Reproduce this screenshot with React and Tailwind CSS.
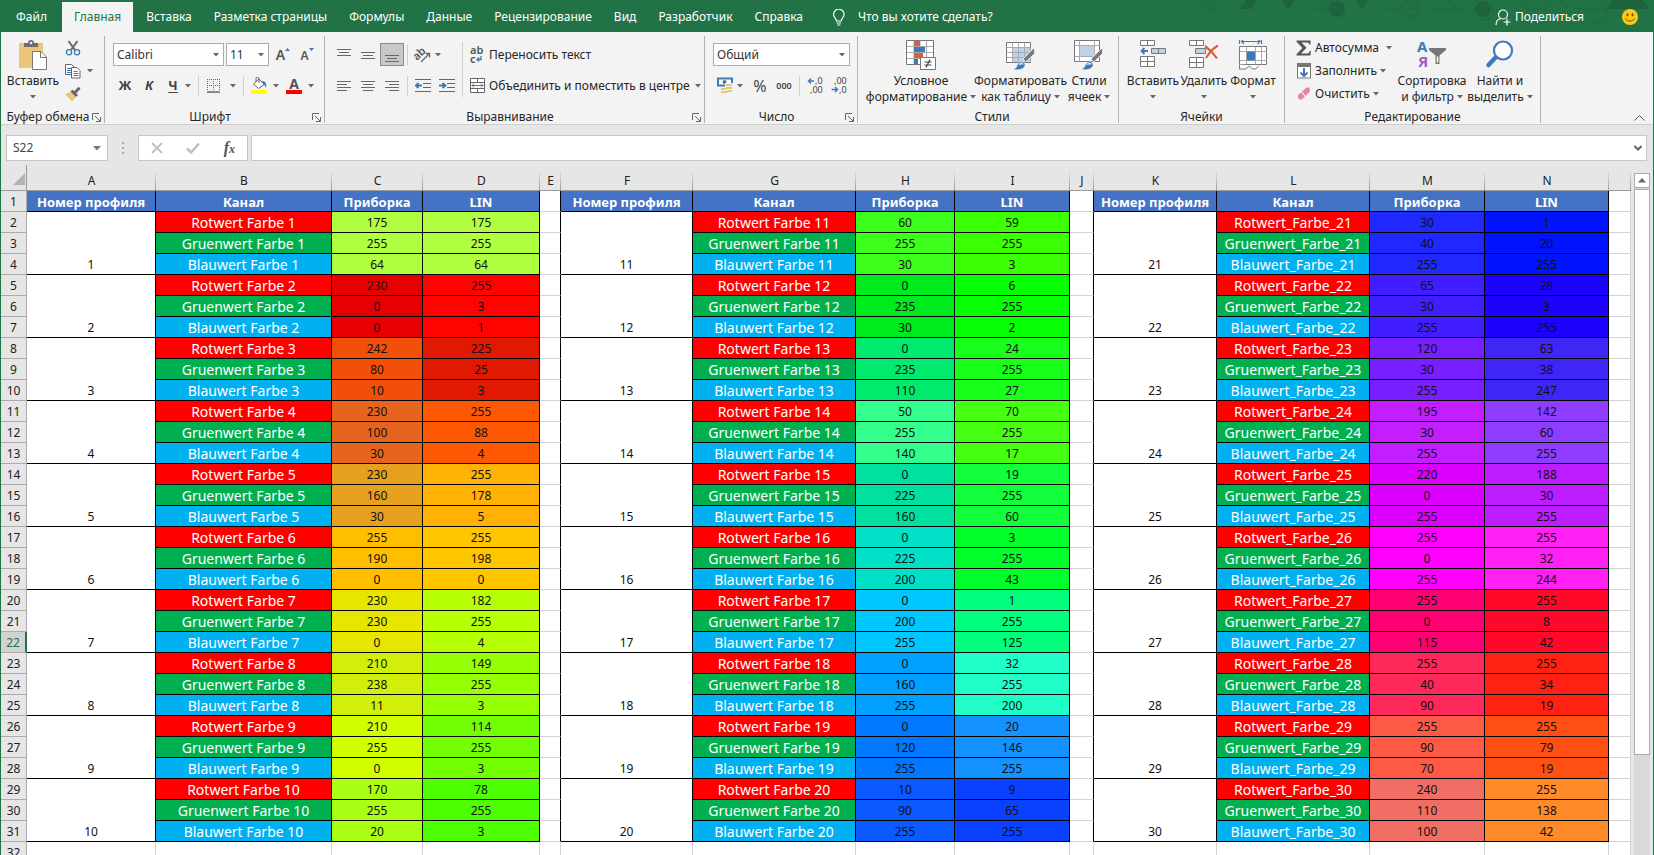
import clsx from 'clsx'

const TABS = ['Файл', 'Главная', 'Вставка', 'Разметка страницы', 'Формулы', 'Данные', 'Рецензирование', 'Вид', 'Разработчик', 'Справка']

const LETTERS = ['A', 'B', 'C', 'D', 'E', 'F', 'G', 'H', 'I', 'J', 'K', 'L', 'M', 'N', '']

// [panel rgb, LIN rgb] for every profile, 1..30
const PROFILES = [
  [[175, 255, 64], [175, 255, 64]],
  [[230, 0, 0], [255, 3, 1]],
  [[242, 80, 10], [225, 25, 3]],
  [[230, 100, 30], [255, 88, 4]],
  [[230, 160, 30], [255, 178, 5]],
  [[255, 190, 0], [255, 198, 0]],
  [[230, 230, 0], [182, 255, 4]],
  [[210, 238, 11], [149, 255, 3]],
  [[210, 255, 0], [114, 255, 3]],
  [[170, 255, 20], [78, 255, 3]],
  [[60, 255, 30], [59, 255, 3]],
  [[0, 235, 30], [6, 255, 2]],
  [[0, 235, 110], [24, 255, 27]],
  [[50, 255, 140], [70, 255, 17]],
  [[0, 225, 160], [19, 255, 60]],
  [[0, 225, 200], [3, 255, 43]],
  [[0, 200, 255], [1, 255, 125]],
  [[0, 160, 255], [32, 255, 200]],
  [[0, 120, 255], [20, 146, 255]],
  [[10, 90, 255], [9, 65, 255]],
  [[30, 40, 255], [1, 20, 255]],
  [[65, 30, 255], [28, 3, 255]],
  [[120, 30, 255], [63, 38, 247]],
  [[195, 30, 255], [142, 60, 255]],
  [[220, 0, 255], [188, 30, 255]],
  [[255, 0, 255], [255, 32, 244]],
  [[255, 0, 115], [255, 8, 42]],
  [[255, 40, 90], [255, 34, 19]],
  [[255, 90, 70], [255, 79, 19]],
  [[240, 110, 100], [255, 138, 42]],
]

const CHANNELS = [
  { name: 'Rotwert', bg: 'bg-[#ff0000]' },
  { name: 'Gruenwert', bg: 'bg-[#00b050]' },
  { name: 'Blauwert', bg: 'bg-[#00b0f0]' },
]

function Caret({ className }) {
  return (
    <svg className={clsx('shrink-0', className)} width="6" height="4" viewBox="0 0 6 4" fill="#666">
      <path d="M0 0h6L3 3.6z" />
    </svg>
  )
}

function Launcher() {
  return (
    <svg width="9" height="9" viewBox="0 0 9 9" fill="none" stroke="#666">
      <path d="M.5 7V.5H7M3 3l5 5M8.500 4v4.500H4" />
    </svg>
  )
}

function Group({ title, launcher, className, children }) {
  return (
    <section className={clsx('flex shrink-0 flex-col border-r border-[#b1b1b1]', className)}>
      <div className="flex h-[75px]">{children}</div>
      <div className="flex h-3 items-center px-[3px] leading-3">
        <h2 className="flex-1 text-center whitespace-nowrap">{title}</h2>
        {launcher && (
          <button aria-label={title + ': параметры'}>
            <Launcher />
          </button>
        )}
      </div>
    </section>
  )
}

function IconButton({ label, className, children }) {
  return (
    <button aria-label={label} className={clsx('flex h-[23px] shrink-0 items-center justify-center', className || 'w-6')}>
      {children}
    </button>
  )
}

function Divider({ className }) {
  return <div className={clsx('w-px shrink-0 bg-[#d0d0d0]', className)} />
}

function Combo({ label, value, className }) {
  return (
    <div className={clsx('flex h-[23px] items-center border border-[#ababab] bg-white pr-1', className)}>
      <select aria-label={label} defaultValue={value} className="min-w-0 flex-1 appearance-none bg-transparent pl-[3px] text-[#333] outline-none">
        <option>{value}</option>
      </select>
      <Caret className="pointer-events-none" />
    </div>
  )
}

function BigButton({ icon, line1, line2, className }) {
  return (
    <button className={clsx('flex shrink-0 flex-col items-center pt-1', className)}>
      {icon}
      <span className="mt-[3px] leading-4 whitespace-nowrap">{line1}</span>
      <span className="flex h-4 items-center gap-[3px] leading-4 whitespace-nowrap">
        {line2}
        <Caret />
      </span>
    </button>
  )
}

function Lines({ rows }) {
  return (
    <svg width="16" height="16" viewBox="0 0 16 16" stroke="#666">
      {rows.map(([x, y, w]) => (
        <path key={y} d={`M${x} ${y}.5h${w}`} />
      ))}
    </svg>
  )
}

function PasteIcon() {
  return (
    <svg width="30" height="30" viewBox="0 0 30 30">
      <path d="M1 3h24v25H1z" fill="#ecc57c" />
      <path d="M6 7V3h4a3 3 0 0 1 6 0h4v4z" fill="#6d6d6d" />
      <circle cx="13" cy="3" r="1.300" fill="#f3f3f3" />
      <path d="M14.500 11.500h8.500l5.500 5.500v12.500h-14z" fill="#fff" stroke="#777" />
      <path d="M22.500 11.500v6h6" fill="none" stroke="#777" />
    </svg>
  )
}

function CutIcon() {
  return (
    <svg width="16" height="16" viewBox="0 0 16 16" fill="none">
      <path d="M3.500 1l6.500 9M12.500 1L6 10" stroke="#666" strokeWidth="2" />
      <circle cx="4" cy="12.200" r="2.600" stroke="#3f7ab8" strokeWidth="1.300" />
      <circle cx="12" cy="12.200" r="2.600" stroke="#3f7ab8" strokeWidth="1.300" />
    </svg>
  )
}

function CopyIcon() {
  return (
    <svg width="16" height="16" viewBox="0 0 16 16" fill="#fff">
      <path d="M.5 1.500h6l3 3v7h-9z" stroke="#666" />
      <path d="M2 5.500h4M2 7.500h4M2 9.500h4" stroke="#3f7ab8" />
      <path d="M6.500 4.500h5.500l3 3v7.500H6.500z" stroke="#666" />
      <path d="M8.500 8.500h4M8.500 10.500h5M8.500 12.500h5" stroke="#3f7ab8" />
    </svg>
  )
}

function PainterIcon() {
  return (
    <svg width="16" height="16" viewBox="0 0 16 16">
      <path d="M0 8l6-2 5 5-4 4.500z" fill="#ecc57c" />
      <path d="M5.500 5.500L7.500 3.500l5.500 5.500-2 2z" fill="#666" />
      <path d="M9 5.500L13.500.8l2 2L11 7.500z" fill="#666" />
    </svg>
  )
}

function OrientationIcon() {
  return (
    <svg className="overflow-visible" width="18" height="16" viewBox="0 0 18 16">
      <text x="0" y="11" transform="rotate(-45 5 9)" fontSize="11" fill="#555" fontWeight="600">ab</text>
      <path d="M7 15l8-8M11.500 6.500H15.500V10.500" fill="none" stroke="#666" strokeWidth="1.300" />
    </svg>
  )
}

function IndentIcon({ right }) {
  return (
    <svg width="16" height="14" viewBox="0 0 16 14" fill="none">
      <path d="M0 .5h16M8 4.500h8M8 8.500h8M0 12.500h16" stroke="#666" />
      <path d={right ? 'M0 6.500h6M3.500 4l3 2.500-3 2.500' : 'M7 6.500H1M3.500 4L.8 6.500l2.700 2.500'} stroke="#3f7ab8" strokeWidth="1.800" />
    </svg>
  )
}

function WrapIcon() {
  return (
    <svg className="overflow-visible" width="18" height="18" viewBox="0 0 18 18">
      <text x="2" y="8" fontSize="11" fill="#555" fontWeight="600">ab</text>
      <text x="2" y="17" fontSize="11" fill="#555" fontWeight="600">c</text>
      <path d="M13 10v3.500H9M11 11.500l-2 2 2 2" fill="none" stroke="#3f7ab8" strokeWidth="1.300" />
    </svg>
  )
}

function MergeIcon() {
  return (
    <svg width="18" height="16" viewBox="0 0 18 16" fill="none">
      <path d="M2.500.5h14v14h-14zM2.500 4.500h14M2.500 10.500h14M9.500.5v4M9.500 10.500v4" fill="#fff" stroke="#666" />
      <path d="M4 7.500h11M6 5.500l-2 2 2 2M13 5.500l2 2-2 2" stroke="#3f7ab8" />
    </svg>
  )
}

function BorderIcon() {
  return (
    <svg width="14" height="14" viewBox="0 0 14 14" fill="none" stroke="#666">
      <path d="M.5 0v12M6.500 0v12M12.500 0v12M0 .5h13M0 6.500h13" strokeDasharray="1 1" />
      <path d="M0 13h13" strokeWidth="1.500" />
    </svg>
  )
}

function FillIcon() {
  return (
    <svg width="16" height="17" viewBox="0 0 16 17">
      <path d="M2.500 7L8 2l5 5.500-5.500 4z" fill="#fff" stroke="#666" />
      <path d="M5 5V1.500a1.500 1.500 0 0 1 3 0V6" fill="none" stroke="#666" />
      <path d="M11 4c3 0 5 2.500 4 7-.6-2-1.400-3-2.500-3.500z" fill="#3f7ab8" />
      <path d="M0 13h16v4H0z" fill="#ffff00" />
    </svg>
  )
}

function MoneyIcon() {
  return (
    <svg width="18" height="17" viewBox="0 0 18 17">
      <path d="M2 1.500h14v7H2z" fill="#fff" stroke="#3f7ab8" strokeWidth="2" />
      <circle cx="8.500" cy="5" r="2" fill="#3f7ab8" />
      <path d="M9 6h8v10H9zM4 10h8v7H4z" fill="#f3f3f3" />
      <path d="M10 7h6v2h-6zM10 10h6v2h-6zM5 11h5v2H5zM5 14h6v2H5zM11 13h5v2h-5z" fill="#ecc57c" />
    </svg>
  )
}

function DecimalsIcon({ increase }) {
  return (
    <svg className="overflow-visible" width="16" height="17" viewBox="0 0 16 17" fill="#444">
      <text x={increase ? 8 : 3} y="7" fontSize="9">{increase ? ',0' : ',00'}</text>
      <text x={increase ? 3 : 8} y="16" fontSize="9">{increase ? ',00' : ',0'}</text>
      <path d={increase ? 'M7 4H1.500M4 1.500L1.500 4 4 6.500' : 'M.5 12.500H6.500M4 10l2.500 2.500L4 15'} fill="none" stroke="#3f7ab8" strokeWidth="1.500" />
    </svg>
  )
}

function BrushOver() {
  return (
    <g>
      <path d="M28.500 7.500v6L20 22l-3-3z" fill="#7a7a7a" stroke="#f3f3f3" strokeWidth=".8" />
      <path d="M7 29.500c4-1 3.500-4.500 6.500-7 2.500-2 6 0 5.500 3-.8 3.500-6 5-12 4z" fill="#3f7ab8" stroke="#f3f3f3" strokeWidth=".6" />
      <path d="M13.500 25c1-2 3-2 3.500-.5" fill="none" stroke="#dbe7f3" strokeWidth="1.500" />
    </g>
  )
}

function ConditionalIcon() {
  return (
    <svg width="30" height="30" viewBox="0 0 30 30">
      <path d="M.5.500h27v24H.5z" fill="#fff" stroke="#777" />
      <path d="M8 .5v24M20.500.5v24M1 6.500h26M1 12.500h26M1 18.500h26M14 .5v6" stroke="#aaa" />
      <path d="M8 1h6v5H8zM8 13h9v5H8z" fill="#d9603f" />
      <path d="M8 7h11v5H8zM8 19h4v5H8z" fill="#3f7ab8" />
      <path d="M14.500 17.500h15v12h-15z" fill="#fff" stroke="#777" />
      <path d="M18.500 22h7M18.500 25h7M24 19.500l-4 8" stroke="#444" strokeWidth="1.200" />
    </svg>
  )
}

function FormatTableIcon() {
  return (
    <svg width="30" height="30" viewBox="0 0 30 30">
      <path d="M.5 2.500h24v20H.5z" fill="#fff" stroke="#777" />
      <path d="M7 8h17.500v14H7z" fill="#bcd2e8" />
      <path d="M6.500 2.500v20M12.500 2.500v20M18.500 2.500v20M.5 7.500h24M.5 12.500h24M.5 17.500h24" stroke="#aaa" />
      <BrushOver />
    </svg>
  )
}

function CellStylesIcon() {
  return (
    <svg width="30" height="30" viewBox="0 0 30 30">
      <path d="M.5.500h25v21H.5z" fill="#fff" stroke="#777" />
      <path d="M5.500.500v21M20.500.500v21M.5 5.500h25M.5 16.500h25" stroke="#aaa" />
      <path d="M6 6h14v10H6z" fill="#bcd2e8" />
      <BrushOver />
    </svg>
  )
}

function InsertIcon() {
  return (
    <svg width="30" height="30" viewBox="0 0 30 30" fill="#fff" stroke="#777">
      <path d="M2.500.500h14v5h-14zM9.500.500v5M2.500 16.500h14v10h-14zM9.500 16.500v10M2.500 21.500h14" />
      <path d="M13.500 8.500h14v5h-14zM20.500 8.500v5" fill="#bcd2e8" />
      <path d="M10 11H4M6.500 8L3.500 11l3 3" fill="none" stroke="#3f7ab8" strokeWidth="1.800" />
    </svg>
  )
}

function DeleteIcon() {
  return (
    <svg width="30" height="30" viewBox="0 0 30 30" fill="#fff" stroke="#777">
      <path d="M.5.500h14v5h-14zM7.500.500v5M.5 17.500h14v10h-14zM7.500 17.500v10M.5 22.500h14" />
      <path d="M6.500 8.500h10v5h-10z" fill="#bcd2e8" />
      <path d="M16 6c4 3 9 8 12 12.500M29 5.500c-5 3-9 7.500-12 12.500" fill="none" stroke="#d9603f" strokeWidth="2.200" />
    </svg>
  )
}

function FormatIcon() {
  return (
    <svg width="30" height="30" viewBox="0 0 30 30" fill="none">
      <path d="M1.500 6.500h27v18h-27z" fill="#fff" stroke="#777" />
      <path d="M8.500 6.500v18M17.500 6.500v18M23.500 6.500v18M1.500 11.500h27M1.500 20.500h27" stroke="#aaa" />
      <path d="M9 11.500h8v9H9z" fill="#3f7ab8" />
      <path d="M1.500 24.500v4.500h6l4-3 3 3h3l3-3" fill="#fff" stroke="#777" />
      <path d="M1.500-1v5M23.500-1v5M3 1.500h19M6-1L3.500 1.500 6 4M19.500-1L22 1.500 19.500 4" stroke="#3f7ab8" strokeWidth="1.200" />
    </svg>
  )
}

function SumIcon() {
  return (
    <svg width="16" height="16" viewBox="0 0 16 16">
      <path d="M.5.500h14v4h-1.200c-.3-1.500-1-2-2.500-2H5.500l5 5.300-5.500 5.700h6c1.500 0 2.300-.6 2.700-2.500h1.200l-.5 4.500H.5v-1.300L6.500 8 .5 1.700z" fill="#555" />
    </svg>
  )
}

function FillDownIcon() {
  return (
    <svg width="16" height="16" viewBox="0 0 16 16">
      <path d="M1.500 1h13v14h-13z" fill="#fff" stroke="#777" />
      <path d="M1 0h14v4H1z" fill="#777" />
      <path d="M8 5v8M4.500 9.500L8 13l3.500-3.500" fill="none" stroke="#3f7ab8" strokeWidth="2" />
    </svg>
  )
}

function EraserIcon() {
  return (
    <svg width="16" height="14" viewBox="0 0 16 14">
      <path d="M6 4.500L10.500.500h3l.5 4L9.500 9z" fill="#e8879c" />
      <path d="M5.300 5.200L8.800 9.800 6 12.500H3.500L2 11V8z" fill="#e8879c" />
    </svg>
  )
}

function SortIcon() {
  return (
    <svg className="overflow-visible" width="30" height="30" viewBox="0 0 30 30">
      <text x="0" y="12" fontSize="15" fontWeight="700" fill="#3f7ab8">А</text>
      <text x="1" y="27" fontSize="15" fontWeight="700" fill="#9a5fc0">Я</text>
      <path d="M12 8h17v2l-6.500 5.500V24h-4v-8.500L12 10z" fill="#777" />
      <path d="M19.800 16.500v6h1.500v-6z" fill="#fff" />
    </svg>
  )
}

function FindIcon() {
  return (
    <svg width="30" height="30" viewBox="0 0 30 30">
      <path d="M11.500 16.500L3.500 25" stroke="#3f7ab8" strokeWidth="4.500" strokeLinecap="round" />
      <circle cx="18" cy="10.500" r="9" fill="#fff" stroke="#3f7ab8" strokeWidth="2.200" />
    </svg>
  )
}

function TitleArt() {
  return (
    <svg className="pointer-events-none absolute top-0 right-0" width="474" height="32" viewBox="0 0 474 32" fill="none" stroke="#1e693f">
      <path d="M20 0l6 9h10L30 0M135 9h12l6-9M150 0l-8 9M200 0l8 9h26l8-9M248 9h36M270 0l8 9M345 9l6-9M340 0l6 9h20M395 9h32M405 22l-6-11M420 0l8 14-6 8h-14" />
      <circle cx="231" cy="9" r="7" />
      <circle cx="231" cy="9" r="10" />
      <circle cx="304" cy="9" r="11" />
      <circle cx="377" cy="9" r="10" />
      <g fill="#1d643d" stroke="none">
        <path d="M67 0h10l-4 9H60zM103 0h13l-7 9zM177 0h12l-6 9zM433 0h30l8 9h-44z" />
        <circle cx="158" cy="9" r="8" />
        <circle cx="304" cy="9" r="8" />
      </g>
    </svg>
  )
}

function TabBar() {
  return (
    <header className="relative flex h-8 shrink-0 items-stretch bg-[#217346] pt-[2px] text-white">
      <TitleArt />
      <nav className="flex">
        {TABS.map((tab) => (
          <button
            key={tab}
            className={clsx(
              'whitespace-nowrap',
              tab === 'Файл' && 'px-[15px]',
              tab === 'Главная' && 'mr-[2px] bg-[#f3f3f3] px-3 text-[#217346]',
              tab !== 'Файл' && tab !== 'Главная' && 'px-[11px]'
            )}
          >
            {tab}
          </button>
        ))}
      </nav>
      <button className="ml-[18px] flex items-center gap-3 whitespace-nowrap">
        <svg width="14" height="17" viewBox="0 0 14 17" fill="none" stroke="#fff" strokeWidth="1.200">
          <path d="M4.500 12c0-2.500-3-3.500-3-6.500a5.300 5.300 0 0 1 10.600 0c0 3-3 4-3 6.500zM4.500 14h4.600M5.200 16h3.200" />
        </svg>
        Что вы хотите сделать?
      </button>
      <div className="relative ml-auto flex items-center pr-[15px]">
        <button className="flex items-center gap-1">
          <svg width="16" height="17" viewBox="0 0 16 17" fill="none" stroke="#fff" strokeWidth="1.200">
            <circle cx="8" cy="5.500" r="4.500" />
            <path d="M1 16c0-3.500 2-6 5-6.500M12 9.500v7M8.500 13h7" />
          </svg>
          Поделиться
        </button>
        <button aria-label="Отзыв" className="ml-[38px]">
          <svg width="16" height="16" viewBox="0 0 16 16">
            <circle cx="8" cy="8" r="8" fill="#fdc913" />
            <ellipse cx="5.500" cy="5.800" rx="1" ry="1.600" fill="#5d4a1a" />
            <ellipse cx="10.500" cy="5.800" rx="1" ry="1.600" fill="#5d4a1a" />
            <path d="M3.500 9.500c1.500 3.500 7.500 3.500 9 0" fill="none" stroke="#5d4a1a" />
          </svg>
        </button>
      </div>
    </header>
  )
}

function Ribbon() {
  return (
    <div className="flex shrink-0 border-b border-[#cfcfcf] bg-[#f3f3f3] pt-1 pb-px text-[#262626]">
      <Group title="Буфер обмена" launcher className="w-[104px]">
        <BigButton className="w-16" icon={<PasteIcon />} line1="Вставить" />
        <div className="flex flex-col">
          <IconButton label="Вырезать" className="w-4"><CutIcon /></IconButton>
          <IconButton label="Копировать" className="w-7 gap-[6px]">
            <CopyIcon />
            <Caret />
          </IconButton>
          <IconButton label="Формат по образцу" className="w-4"><PainterIcon /></IconButton>
        </div>
      </Group>

      <Group title="Шрифт" launcher className="w-[220px]">
        <div className="flex flex-col gap-2 pt-[7px] pl-2">
          <div className="flex items-center">
            <Combo label="Шрифт" value="Calibri" className="w-[111px]" />
            <Combo label="Размер" value="11" className="ml-[2px] w-[43px]" />
            <IconButton label="Увеличить" className="ml-[2px] w-6">
              <span className="text-sm font-semibold text-[#555]">A</span>
              <svg width="5" height="14" viewBox="0 0 5 14" fill="#3f7ab8"><path d="M0 3h5L2.500 0z" /></svg>
            </IconButton>
            <IconButton label="Уменьшить">
              <span className="pt-[2px] text-xs font-semibold text-[#555]">A</span>
              <svg width="5" height="14" viewBox="0 0 5 14" fill="#3f7ab8"><path d="M0 0h5L2.500 3z" /></svg>
            </IconButton>
          </div>
          <div className="flex items-center">
            <IconButton label="Полужирный"><b className="text-[13px] text-[#444]">Ж</b></IconButton>
            <IconButton label="Курсив"><b className="text-[13px] text-[#444] italic">К</b></IconButton>
            <IconButton label="Подчеркнутый"><b className="text-[13px] text-[#444] underline underline-offset-2">Ч</b></IconButton>
            <Caret />
            <Divider className="mx-[7px] h-5" />
            <IconButton label="Границы" className="w-4"><BorderIcon /></IconButton>
            <Caret className="ml-2" />
            <Divider className="mx-[7px] h-5" />
            <IconButton label="Заливка" className="w-4"><FillIcon /></IconButton>
            <Caret className="ml-[6px]" />
            <IconButton label="Цвет текста" className="ml-[7px] w-4 flex-col">
              <span className="text-sm leading-3 font-bold text-[#555]">A</span>
              <span className="h-1 w-4 bg-[#ff0000]" />
            </IconButton>
            <Caret className="ml-[6px]" />
          </div>
        </div>
      </Group>

      <Group title="Выравнивание" launcher className="w-[380px]">
        <div className="flex flex-col gap-2 pt-[7px] pl-[7px]">
          <div className="flex items-center">
            <IconButton label="По верхнему краю"><Lines rows={[[1, 2, 14], [3, 5, 10], [1, 8, 14]]} /></IconButton>
            <IconButton label="По середине"><Lines rows={[[1, 5, 14], [3, 8, 10], [1, 11, 14]]} /></IconButton>
            <IconButton label="По нижнему краю" className="w-6 border border-[#8a8a8a] bg-[#c8c8c8]">
              <Lines rows={[[1, 8, 14], [3, 11, 10], [1, 14, 14]]} />
            </IconButton>
            <Divider className="mx-[3px] h-5" />
            <IconButton label="Ориентация"><OrientationIcon /></IconButton>
            <Caret />
          </div>
          <div className="flex items-center">
            <IconButton label="По левому краю"><Lines rows={[[1, 3, 14], [1, 6, 10], [1, 9, 14], [1, 12, 10]]} /></IconButton>
            <IconButton label="По центру"><Lines rows={[[1, 3, 14], [3, 6, 10], [1, 9, 14], [3, 12, 10]]} /></IconButton>
            <IconButton label="По правому краю"><Lines rows={[[1, 3, 14], [5, 6, 10], [1, 9, 14], [5, 12, 10]]} /></IconButton>
            <Divider className="mx-[3px] h-5" />
            <IconButton label="Уменьшить отступ"><IndentIcon /></IconButton>
            <IconButton label="Увеличить отступ"><IndentIcon right /></IconButton>
          </div>
        </div>
        <Divider className="mt-[6px] ml-[3px] h-[55px]" />
        <div className="flex flex-1 flex-col gap-2 pt-[7px] pl-[5px]">
          <button className="flex h-[23px] items-center gap-[3px] whitespace-nowrap">
            <WrapIcon />
            Переносить текст
          </button>
          <button className="flex h-[23px] items-center gap-[3px] whitespace-nowrap">
            <MergeIcon />
            Объединить и поместить в центре
            <Caret className="ml-[2px]" />
          </button>
        </div>
      </Group>

      <Group title="Число" launcher className="w-[153px]">
        <div className="flex flex-col gap-2 pt-[7px] pl-2">
          <Combo label="Числовой формат" value="Общий" className="w-[137px]" />
          <div className="flex items-center">
            <IconButton label="Денежный формат"><MoneyIcon /></IconButton>
            <Caret />
            <IconButton label="Процентный формат" className="ml-[5px] w-6"><span className="text-base text-[#444]">%</span></IconButton>
            <IconButton label="Формат с разделителями"><span className="text-[9px] font-semibold text-[#444]">000</span></IconButton>
            <Divider className="mx-[3px] h-5" />
            <IconButton label="Увеличить разрядность"><DecimalsIcon increase /></IconButton>
            <IconButton label="Уменьшить разрядность"><DecimalsIcon /></IconButton>
          </div>
        </div>
      </Group>

      <Group title="Стили" className="w-[261px] pl-2">
        <BigButton className="w-[110px]" icon={<ConditionalIcon />} line1="Условное" line2="форматирование" />
        <BigButton className="w-[89px]" icon={<FormatTableIcon />} line1="Форматировать" line2="как таблицу" />
        <BigButton className="w-12" icon={<CellStylesIcon />} line1="Стили" line2="ячеек" />
      </Group>

      <Group title="Ячейки" className="w-[166px] px-2">
        <BigButton className="w-[52px]" icon={<InsertIcon />} line1="Вставить" />
        <BigButton className="w-[50px]" icon={<DeleteIcon />} line1="Удалить" />
        <BigButton className="w-12" icon={<FormatIcon />} line1="Формат" />
      </Group>

      <Group title="Редактирование" className="w-[256px]">
        <div className="flex w-[111px] flex-col pl-[11px]">
          <button className="flex h-[23px] items-center gap-[3px] whitespace-nowrap"><SumIcon />Автосумма<Caret className="ml-1" /></button>
          <button className="flex h-[23px] items-center gap-[3px] whitespace-nowrap"><FillDownIcon />Заполнить<Caret /></button>
          <button className="flex h-[23px] items-center gap-[3px] whitespace-nowrap"><EraserIcon />Очистить<Caret /></button>
        </div>
        <BigButton className="w-[72px]" icon={<SortIcon />} line1="Сортировка" line2="и фильтр" />
        <BigButton className="w-16" icon={<FindIcon />} line1="Найти и" line2="выделить" />
      </Group>

      <button aria-label="Свернуть ленту" className="mt-auto mr-2 mb-[2px] ml-auto">
        <svg width="11" height="6" viewBox="0 0 11 6" fill="none" stroke="#555"><path d="M.5 5.500l5-5 5 5" /></svg>
      </button>
    </div>
  )
}

function FormulaBar() {
  return (
    <div className="flex shrink-0 items-center pt-[10px] pr-[6px] pb-1 pl-[5px] text-[#444]">
      <div className="flex h-[26px] w-[102px] items-center border border-[#c6c6c6] bg-white pr-[6px]">
        <input aria-label="Имя ячейки" defaultValue="S22" className="min-w-0 flex-1 pl-[6px] outline-none" />
        <svg width="8" height="5" viewBox="0 0 8 5" fill="#777"><path d="M0 0h8L4 4.500z" /></svg>
      </div>
      <svg className="mx-[13px]" width="4" height="12" viewBox="0 0 4 12" fill="#aaa">
        <path d="M1 0h2v2H1zM1 5h2v2H1zM1 10h2v2H1z" />
      </svg>
      <div className="flex h-[26px] w-[110px] items-center justify-between border border-[#c6c6c6] bg-white px-3">
        <button aria-label="Отмена">
          <svg width="12" height="12" viewBox="0 0 12 12" stroke="#c0c0c0" strokeWidth="1.800"><path d="M1 1l10 10M11 1L1 11" /></svg>
        </button>
        <button aria-label="Ввод">
          <svg width="14" height="12" viewBox="0 0 14 12" fill="none" stroke="#c0c0c0" strokeWidth="2.500"><path d="M1 6.500l4 4L13 1.500" /></svg>
        </button>
        <button aria-label="Вставить функцию" className="font-['Liberation_Serif',serif] text-base leading-4 font-bold text-[#555] italic">
          f<span className="text-xs">x</span>
        </button>
      </div>
      <div className="ml-[3px] flex h-[26px] flex-1 items-center border border-[#c6c6c6] bg-white pr-1">
        <input aria-label="Строка формул" className="min-w-0 flex-1 px-2 outline-none" />
        <svg width="8" height="6" viewBox="0 0 8 6" fill="none" stroke="#666" strokeWidth="2"><path d="M.5 1L4 4.500 7.500 1" /></svg>
      </div>
    </div>
  )
}

function ProfileCells({ profile, channel }) {
  const sep = profile > 20 ? '_' : ' '
  const { name, bg } = CHANNELS[channel]
  const colors = PROFILES[profile - 1]
  return (
    <>
      {channel === 0 && (
        <td rowSpan={3} className="border-r border-b border-black bg-white pt-[2px] align-bottom">{profile}</td>
      )}
      <td className={clsx('border-r border-b border-black pt-[2px] text-sm leading-[18px] text-white', bg)}>
        {[name, 'Farbe', profile].join(sep)}
      </td>
      {colors.map((rgb, i) => (
        <td key={i} className="border-r border-b border-black pt-[2px]" style={{ backgroundColor: `rgb(${rgb.join(',')})` }}>
          {rgb[channel]}
        </td>
      ))}
    </>
  )
}

function HeadCells() {
  return ['Номер профиля', 'Канал', 'Приборка', 'LIN'].map((text) => (
    <td key={text} className="border-r border-b border-black bg-[#4472c4] pt-[2px] text-[13px] leading-[18px] font-bold whitespace-nowrap text-white">
      {text}
    </td>
  ))
}

function RowNumber({ n }) {
  return (
    <th
      scope="row"
      className={clsx(
        'border-b border-[#ababab] pt-[2px] font-normal',
        n === 22 ? 'border-r-2 border-r-[#217346] bg-[#d2d2d2] text-[#217346]' : 'border-r bg-[#e6e6e6] text-[#222]'
      )}
    >
      {n}
    </th>
  )
}

function Gap({ black }) {
  return <td className={clsx('border-r border-b border-[#d4d4d4] bg-white', black && 'border-r-black')} />
}

function Sheet() {
  return (
    <table className="w-full table-fixed border-separate border-spacing-0 text-center text-xs leading-[18px] text-[#111]">
      <colgroup>
        <col className="w-[26px]" />
        <col className="w-[129px]" />
        <col className="w-[176px]" />
        <col className="w-[91px]" />
        <col className="w-[117px]" />
        <col className="w-[21px]" />
        <col className="w-[132px]" />
        <col className="w-[163px]" />
        <col className="w-[99px]" />
        <col className="w-[115px]" />
        <col className="w-[24px]" />
        <col className="w-[123px]" />
        <col className="w-[153px]" />
        <col className="w-[115px]" />
        <col className="w-[124px]" />
        <col />
      </colgroup>
      <thead>
        <tr className="h-[26px]">
          <th aria-label="Выделить все" className="border-r border-b border-[#9b9b9b] align-bottom">
            <svg className="mb-1 ml-auto" width="13" height="13" viewBox="0 0 13 13" fill="#b4b4b4"><path d="M12 0v12H0z" /></svg>
          </th>
          {LETTERS.map((letter, i) => (
            <th
              key={i}
              scope="col"
              className="border-b border-[#9b9b9b] bg-[linear-gradient(to_top,#9b9b9b,#e6e6e6)] bg-[length:1px_20px] bg-right-bottom bg-no-repeat pt-[6px] font-normal text-[#222]"
            >
              {letter}
            </th>
          ))}
        </tr>
      </thead>
      <tbody>
        <tr className="h-[21px]">
          <RowNumber n={1} />
          <HeadCells />
          <Gap black />
          <HeadCells />
          <Gap black />
          <HeadCells />
          <Gap />
        </tr>
        {Array.from({ length: 30 }, (_, i) => {
          const profile = Math.floor(i / 3) + 1
          const channel = i % 3
          return (
            <tr key={i} className="h-[21px]">
              <RowNumber n={i + 2} />
              <ProfileCells profile={profile} channel={channel} />
              <Gap black />
              <ProfileCells profile={profile + 10} channel={channel} />
              <Gap black />
              <ProfileCells profile={profile + 20} channel={channel} />
              <Gap />
            </tr>
          )
        })}
        <tr className="h-[21px]">
          <RowNumber n={32} />
          {LETTERS.map((_, i) => (
            <Gap key={i} />
          ))}
        </tr>
      </tbody>
    </table>
  )
}

function ScrollBar() {
  return (
    <div className="flex w-[22px] shrink-0 flex-col pr-[3px] pl-[3px] pt-2">
      <button aria-label="Вверх" className="flex h-[15px] shrink-0 items-center justify-center border border-[#ababab] bg-white">
        <svg width="8" height="5" viewBox="0 0 8 5" fill="#666"><path d="M0 4.500h8L4 0z" /></svg>
      </button>
      <div className="flex-1 bg-[#d9d9d9] pt-px">
        <div className="h-[85%] border border-[#ababab] bg-white" />
      </div>
    </div>
  )
}

export default function App() {
  return (
    <div className="flex h-screen flex-col overflow-hidden border-x border-[#217346] bg-[#e6e6e6] font-['Noto_Sans','Open_Sans',sans-serif] text-xs">
      <TabBar />
      <Ribbon />
      <FormulaBar />
      <main className="flex min-h-0 flex-1 overflow-hidden">
        <div className="min-w-0 flex-1 overflow-hidden">
          <Sheet />
        </div>
        <ScrollBar />
      </main>
    </div>
  )
}
